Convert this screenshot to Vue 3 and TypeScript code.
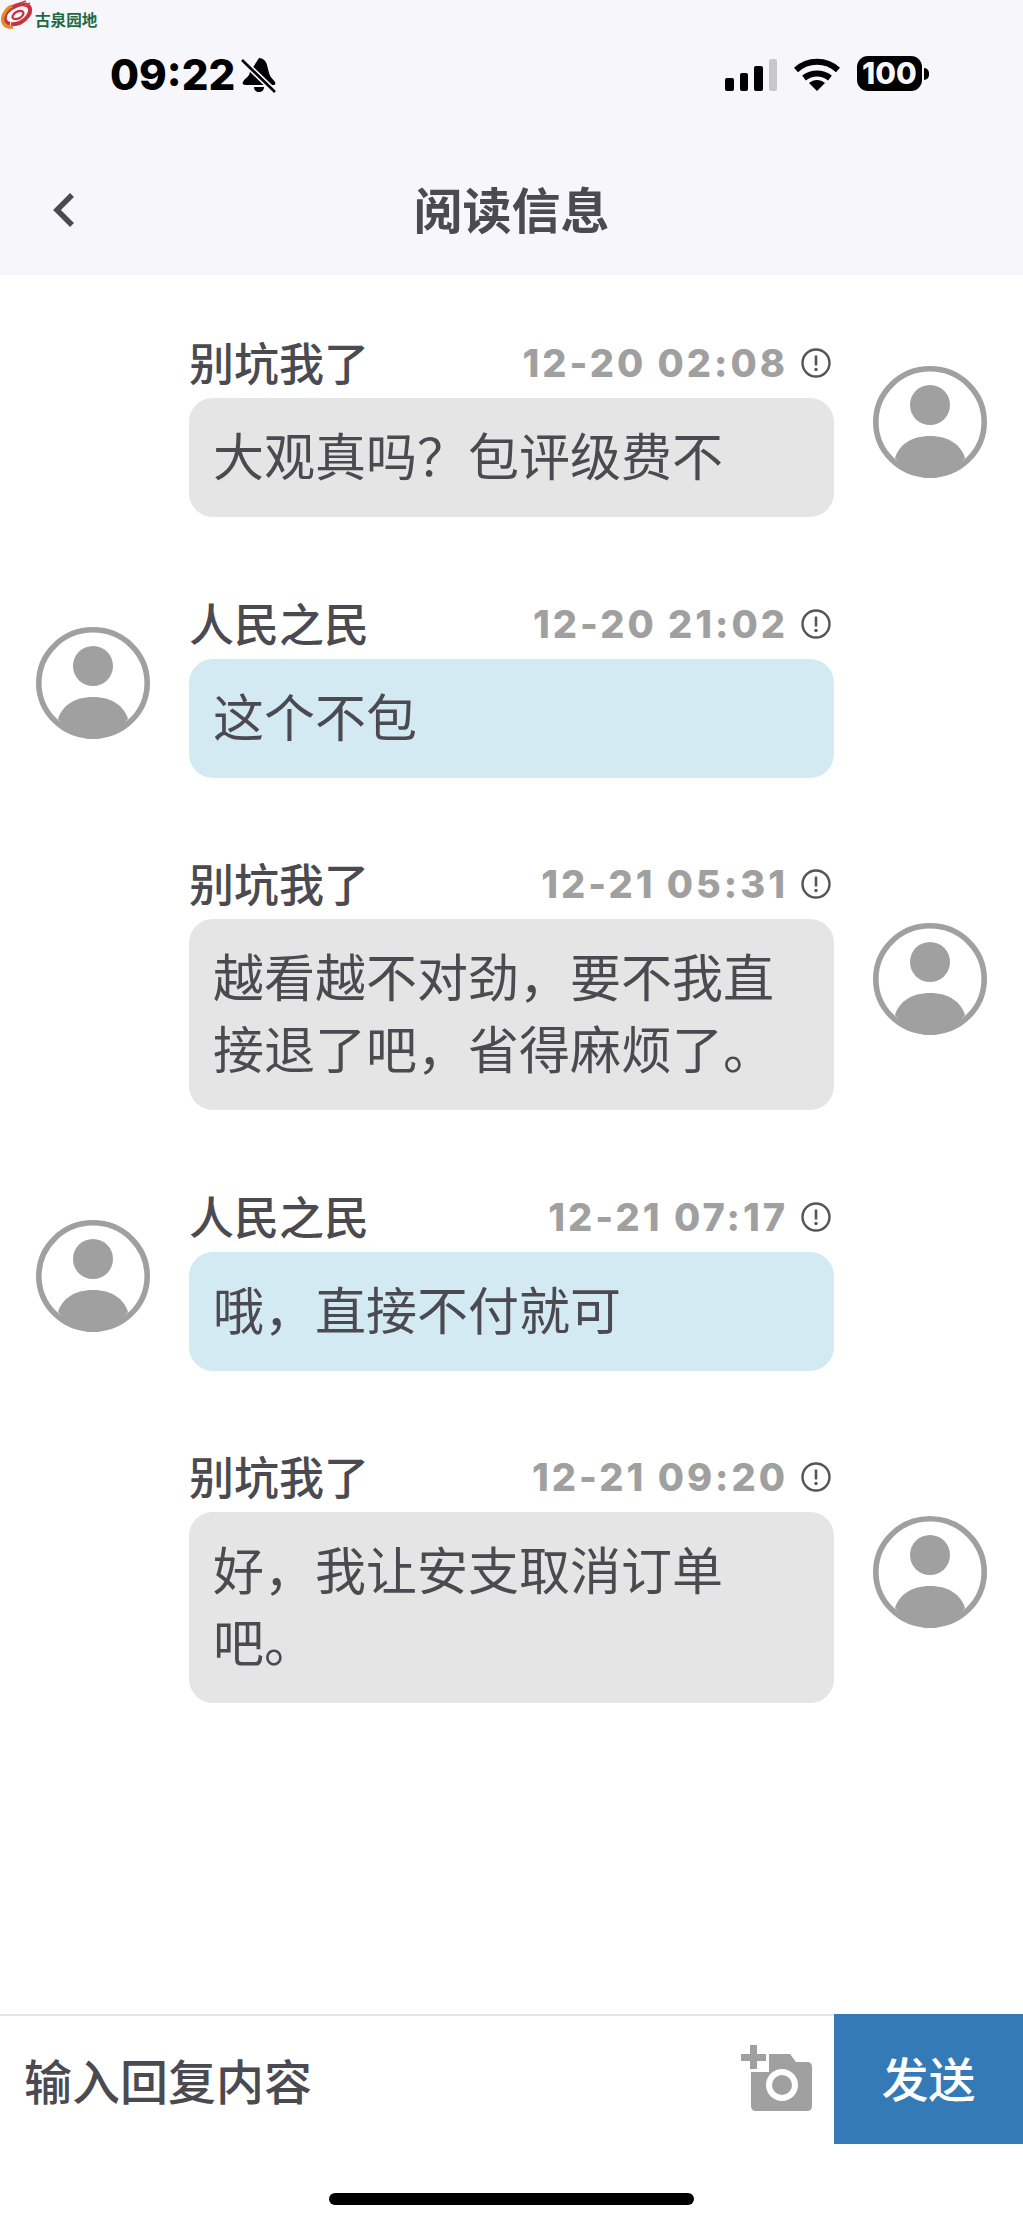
<script setup lang="ts">
interface Msg {
  name: string
  time: string
  text: string[]
  mine: boolean
}

const msgs: Msg[] = [
  { name: '别坑我了', time: '12-20 02:08', text: ['大观真吗？包评级费不'], mine: true },
  { name: '人民之民', time: '12-20 21:02', text: ['这个不包'], mine: false },
  { name: '别坑我了', time: '12-21 05:31', text: ['越看越不对劲，要不我直', '接退了吧，省得麻烦了。'], mine: true },
  { name: '人民之民', time: '12-21 07:17', text: ['哦，直接不付就可'], mine: false },
  { name: '别坑我了', time: '12-21 09:20', text: ['好，我让安支取消订单', '吧。'], mine: true },
]
</script>

<template>
  <div class="page">
    <!-- 水印 -->
    <div class="logo">
      <svg class="mark" width="32" height="30" viewBox="0 0 32 30">
        <path d="M9 24C3 23 2 17 6 12 11 6 20 3 26 5c4 2 4 7 1 11-4 6-11 9-17 8" fill="none" stroke="#c8323c" stroke-width="4" />
        <path d="M12 27C4 28-1 22 3 14 5 10 8 7 11 6" fill="none" stroke="#df8f2a" stroke-width="3.4" />
        <path d="M19 3l6-2M23 6l6-3" stroke="#d8454a" stroke-width="1.6" />
        <ellipse cx="17" cy="15" rx="6" ry="3.4" transform="rotate(-30 17 15)" fill="none" stroke="#c8323c" stroke-width="2.2" />
      </svg>
      <span>古泉园地</span>
    </div>

    <header class="top">
      <div class="status">
        <div class="clock">
          <span>09:22</span>
          <svg class="bell" width="36" height="36" viewBox="0 0 36 36">
            <path d="M18 1c4 0 7 3 8 7l2 8c1 4 4 6 6 9 1 2 0 3-2 3H5c-3 0-4-1-3-3 1-3 4-4 6-7l1-3z" fill="#000" />
            <path d="M13 30h10c0 3-2 5-5 5s-5-2-5-5z" fill="#000" />
            <path d="M1 3l33 32" stroke="#f6f6fb" stroke-width="6" />
            <path d="M1 3l33 32" stroke="#000" stroke-width="2.6" />
          </svg>
        </div>
        <div class="sys">
          <div class="signal">
            <i class="b1"></i><i class="b2"></i><i class="b3"></i><i class="b4"></i>
          </div>
          <svg width="46" height="34" viewBox="0 0 46 34">
            <path d="M2 13C14 2 32 2 44 13" fill="none" stroke="#000" stroke-width="6" />
            <path d="M10 21c8-6 18-6 26 0" fill="none" stroke="#000" stroke-width="6" />
            <path d="M15 26c5-4 11-4 16 0l-8 8z" fill="#000" />
          </svg>
          <div class="battery">
            <span class="cell">100</span>
            <i class="nub"></i>
          </div>
        </div>
      </div>
      <div class="nav">
        <svg class="back" width="24" height="36" viewBox="0 0 24 36">
          <path d="M20 3L5 18l15 15" fill="none" stroke="#4a4a50" stroke-width="5.5" />
        </svg>
        <h1>阅读信息</h1>
      </div>
    </header>

    <main class="list">
      <div v-for="(m, i) in msgs" :key="i" class="row">
        <svg class="avatar" :class="m.mine ? 'right' : 'left'" viewBox="0 0 114 112">
          <ellipse cx="57" cy="56" rx="54.2" ry="53.2" fill="#fff" stroke="#a0a0a0" stroke-width="5.6" />
          <circle cx="57" cy="39" r="20" fill="#a0a0a0" />
          <path d="M22 92c4-13 16-22 35-22s31 9 35 22c-9 12-22 20-35 20s-26-8-35-20z" fill="#a0a0a0" />
        </svg>
        <div class="body">
          <div class="head">
            <span class="name">{{ m.name }}</span>
            <span class="time">{{ m.time }}</span>
            <svg class="warn" width="32" height="32" viewBox="0 0 32 32">
              <circle cx="16" cy="16" r="13.5" fill="none" stroke="#555" stroke-width="2.4" />
              <path d="M16 8.5v10" stroke="#555" stroke-width="2.6" />
              <circle cx="16" cy="22.5" r="1.7" fill="#555" />
            </svg>
          </div>
          <div class="bubble" :class="{ blue: !m.mine }">
            <div v-for="(line, j) in m.text" :key="j">{{ line }}</div>
          </div>
        </div>
      </div>
    </main>

    <footer class="bar">
      <div class="input">输入回复内容</div>
      <svg class="camera" width="74" height="68" viewBox="0 0 74 68">
        <path d="M29 9H50L56 17H67Q72 17 72 22V61Q72 66 67 66H16Q11 66 11 61V27H29Z" fill="#a0a0a0" />
        <circle cx="42" cy="40" r="16" fill="#fff" />
        <circle cx="42" cy="40" r="10" fill="#a0a0a0" />
        <path d="M13.5 0v24M1 12.5h25" stroke="#a0a0a0" stroke-width="7" />
      </svg>
      <div class="send">发送</div>
    </footer>
    <div class="home"><i></i></div>
  </div>
</template>

<style>
html, body {
  margin: 0;
  background: #fff;
}
</style>

<style scoped>
.page {
  position: relative;
  width: 1023px;
  height: 2224px;
  display: flex;
  flex-direction: column;
  overflow: hidden;
  background: #fff;
  color: #4a4a50;
  font-family: "Noto Sans CJK SC", "Inter", sans-serif;
}

/* 左上角水印 */
.logo {
  position: absolute;
  top: 0;
  left: 1px;
  display: flex;
  align-items: flex-start;
  gap: 2px;
}

.logo span {
  font-size: 15.6px;
  font-weight: 700;
  line-height: 38px;
  color: #1d6a47;
}

.top {
  height: 275px;
  flex: none;
  background: #f6f6fb;
}

.status {
  height: 145px;
  box-sizing: border-box;
  padding: 56px 94px 0 110px;
  display: flex;
  justify-content: space-between;
  align-items: flex-start;
}

.clock {
  display: flex;
  align-items: center;
  gap: 6px;
  font-family: "Inter", sans-serif;
  font-size: 42px;
  font-weight: 800;
  line-height: 38px;
  color: #000;
}

.bell {
  flex: none;
}

.sys {
  display: flex;
  align-items: flex-end;
  gap: 17px;
}

.signal {
  display: flex;
  align-items: flex-end;
  gap: 6px;
}

.signal i {
  display: block;
  width: 8.5px;
  border-radius: 2px;
  background: #000;
}

.signal .b1 { height: 13px; }
.signal .b2 { height: 18px; }
.signal .b3 { height: 25px; }
.signal .b4 { height: 32px; background: #c8c8cc; }

.battery {
  display: flex;
  align-items: center;
  gap: 2px;
}

.cell {
  width: 65px;
  height: 35px;
  border-radius: 11px;
  background: #000;
  color: #f6f6fb;
  font-family: "Inter", sans-serif;
  font-size: 30px;
  font-weight: 800;
  line-height: 35px;
  text-align: center;
}

.nub {
  display: block;
  width: 5px;
  height: 12px;
  border-radius: 0 6px 6px 0;
  background: #000;
}

.nav {
  position: relative;
  height: 130px;
  display: flex;
  align-items: center;
  justify-content: center;
}

.nav h1 {
  margin: 0 0 5px;
  font-size: 49px;
  font-weight: 700;
  color: #4a4a50;
}

.back {
  position: absolute;
  left: 52px;
  top: 47px;
}

.list {
  flex: 1;
  padding-top: 55px;
  display: flex;
  flex-direction: column;
  gap: 73.5px;
}

.row {
  display: grid;
  grid-template-columns: 114px 645px 114px;
  column-gap: 39px;
  padding: 0 36px;
  align-items: center;
}

.body {
  grid-column: 2;
  grid-row: 1;
}

.avatar {
  width: 114px;
  height: 112px;
  grid-row: 1;
  margin-top: -3px;
}

.avatar.left { grid-column: 1; }
.avatar.right { grid-column: 3; }

.head {
  height: 68px;
  display: flex;
  align-items: center;
}

.name {
  flex: 1;
  padding-bottom: 5px;
  font-size: 45px;
  font-weight: 500;
  line-height: 63px;
}

.time {
  padding-bottom: 2px;
  font-family: "Inter", sans-serif;
  font-size: 38px;
  font-weight: 800;
  color: #a0a0a0;
  letter-spacing: 3px;
}

.warn {
  margin: 0 2px 2px 12px;
  flex: none;
}

.bubble {
  padding: 20px 24px 27px;
  border-radius: 24px;
  background: #e5e5e5;
  font-size: 51px;
  line-height: 72px;
}

.bubble.blue {
  background: #d4eaf3;
}

.bar {
  height: 130px;
  flex: none;
  display: flex;
  align-items: center;
  border-top: 2px solid #e5e5e5;
  box-sizing: content-box;
}

.input {
  flex: 1;
  padding: 0 0 5px 24px;
  font-size: 48px;
  font-weight: 500;
}

.camera {
  flex: none;
  margin-right: 20px;
  margin-top: -4px;
}

/* 盖住顶部分割线 */
.send {
  width: 189px;
  height: 130px;
  flex: none;
  align-self: flex-start;
  margin-top: -2px;
  background: #337ab7;
  color: #fff;
  font-size: 47px;
  font-weight: 500;
  line-height: 125px;
  text-align: center;
}

.home {
  height: 78px;
  flex: none;
  display: flex;
  justify-content: center;
  padding-top: 47px;
  box-sizing: border-box;
}

.home i {
  display: block;
  width: 365px;
  height: 12px;
  border-radius: 6px;
  background: #000;
}
</style>
